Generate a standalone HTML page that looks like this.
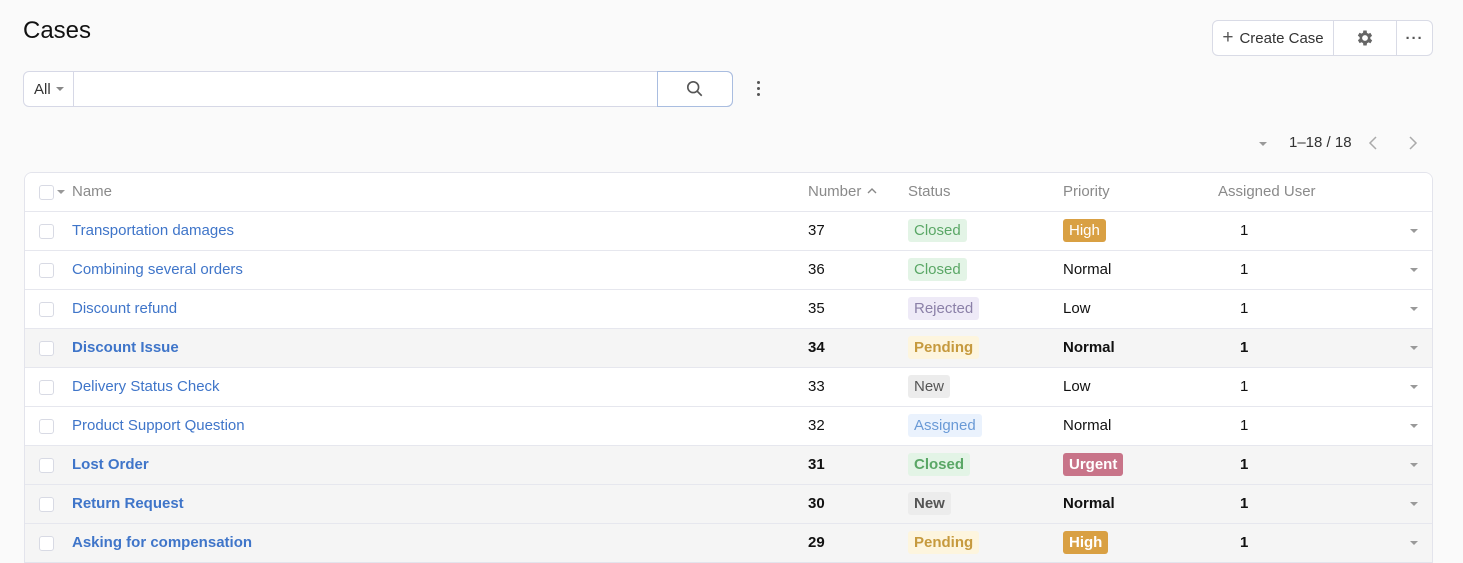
<!DOCTYPE html><html><head><style>
*{box-sizing:border-box;margin:0;padding:0}
body{width:1463px;height:562px;overflow:hidden;background:#fafafa;font-family:"Liberation Sans",sans-serif;font-size:15px;color:#111;position:relative}
.a{position:absolute}
h1{position:absolute;left:23px;top:17px;font-size:24px;font-weight:400;color:#111}
.btns{left:1212px;top:20px;width:221px;height:36px;border:1px solid #d9dbe6;border-radius:6px;background:#fff;display:flex}
.btns div{display:flex;align-items:center;justify-content:center;border-right:1px solid #d9dbe6;height:100%;color:#333}
.search{left:23px;top:71px;width:710px;height:36px;border:1px solid #d6d8e6;border-radius:6px;background:#fff}
.wrap{position:absolute;left:24px;top:172px;width:1409px;border:1px solid #e3e4ec;border-radius:8px 8px 0 0;overflow:hidden;background:#fff}
table{width:1407px;border-collapse:collapse;table-layout:fixed;background:#fff}
td{height:39px;border-top:1px solid #e6e7ee;padding:0;vertical-align:middle;white-space:nowrap}
tr.h td{height:38px;border-top:none;color:#8a8a8a}
tr.b td{background:#f5f5f5;font-weight:700}
.cb{display:inline-block;width:15px;height:15px;border:1px solid #d8dae4;border-radius:3px;background:#fff;margin-left:14px;vertical-align:middle}
a{color:#3f75c9;text-decoration:none}
.l{padding:3px 6px;border-radius:3px;font-weight:400}
tr.b .l{font-weight:700}
.cl{background:#e3f4e6;color:#5aa766}.rj{background:#eeeaf7;color:#8b80a8}.pe{background:#fdf5de;color:#c69a3e}.nw{background:#ececec;color:#555}.as{background:#eaf2fd;color:#6a9ad6}
.hi{background:#d9a043;color:#fff}.ur{background:#c87489;color:#fff}
.car{width:0;height:0;border-left:4px solid transparent;border-right:4px solid transparent;border-top:4px solid #999;display:inline-block;vertical-align:middle}
td.u{padding-left:22px}
td.c{text-align:right;padding-right:14px}
</style></head><body>
<h1>Cases</h1>
<div class="a btns"><div style="width:121px;font-size:15px"><span style="font-size:19px;margin-right:6px;color:#555">+</span>Create Case</div><div style="width:63px"><svg width="20" height="20" viewBox="0 0 24 24"><path fill="#666" d="M19.4 13a7.5 7.5 0 000-2l2.1-1.6-2-3.5-2.5 1a7.6 7.6 0 00-1.7-1L15 3h-4l-.4 2.7a7.6 7.6 0 00-1.7 1l-2.5-1-2 3.5L6.6 11a7.5 7.5 0 000 2l-2.1 1.6 2 3.5 2.5-1c.5.4 1.1.7 1.7 1L11 21h4l.4-2.7c.6-.3 1.200-.6 1.7-1l2.5 1 2-3.5zM13 15.5a3.5 3.5 0 110-7 3.5 3.5 0 010 7z" transform="translate(-1 0)"/></svg></div><div style="width:35px;border:none;font-weight:700;letter-spacing:1px;color:#555">···</div></div>
<div class="a search"><div class="a" style="left:0;top:0;width:50px;height:34px;border-right:1px solid #d6d8e6;display:flex;align-items:center;padding-left:10px;color:#333">All<span class="car" style="margin-left:5px;border-top-color:#888"></span></div>
<div class="a" style="left:633px;top:-1px;width:76px;height:36px;border:1px solid #a9bde0;border-radius:0 6px 6px 0;display:flex;align-items:center;justify-content:center"><svg width="18" height="18" viewBox="0 0 20 20"><circle cx="8" cy="8" r="6" fill="none" stroke="#555" stroke-width="1.8"/><path d="M12.5 12.5l5 5" stroke="#555" stroke-width="1.8"/></svg></div></div>
<div class="a" style="left:757px;top:81px;width:3px"><div style="width:3px;height:3px;background:#555;border-radius:50%;margin-bottom:3px"></div><div style="width:3px;height:3px;background:#555;border-radius:50%;margin-bottom:3px"></div><div style="width:3px;height:3px;background:#555;border-radius:50%"></div></div>
<span class="a car" style="left:1259px;top:142px"></span>
<div class="a" style="left:1289px;top:134px;color:#333">1–18 / 18</div>
<svg class="a" style="left:1367px;top:135px" width="12" height="16"><path d="M9 2L3 8l6 6" fill="none" stroke="#aaa" stroke-width="1.5"/></svg>
<svg class="a" style="left:1407px;top:135px" width="12" height="16"><path d="M3 2l6 6-6 6" fill="none" stroke="#aaa" stroke-width="1.5"/></svg>
<div class="wrap"><table>
<colgroup><col style="width:47px"><col style="width:736px"><col style="width:100px"><col style="width:155px"><col style="width:155px"><col style="width:170px"><col style="width:44px"></colgroup>
<tr class="h"><td><span class="cb"></span><span class="car" style="margin-left:3px"></span></td><td>Name</td><td>Number <svg width="12" height="10" viewBox="0 0 12 10"><path d="M2 7l4-4 4 4" fill="none" stroke="#888" stroke-width="1.4"/></svg></td><td>Status</td><td>Priority</td><td>Assigned User</td><td></td></tr>
<tr><td><span class="cb"></span></td><td><a>Transportation damages</a></td><td>37</td><td><span class="l cl">Closed</span></td><td><span class="l hi">High</span></td><td class="u">1</td><td class="c"><span class="car"></span></td></tr>
<tr><td><span class="cb"></span></td><td><a>Combining several orders</a></td><td>36</td><td><span class="l cl">Closed</span></td><td>Normal</td><td class="u">1</td><td class="c"><span class="car"></span></td></tr>
<tr><td><span class="cb"></span></td><td><a>Discount refund</a></td><td>35</td><td><span class="l rj">Rejected</span></td><td>Low</td><td class="u">1</td><td class="c"><span class="car"></span></td></tr>
<tr class="b"><td><span class="cb"></span></td><td><a>Discount Issue</a></td><td>34</td><td><span class="l pe">Pending</span></td><td>Normal</td><td class="u">1</td><td class="c"><span class="car"></span></td></tr>
<tr><td><span class="cb"></span></td><td><a>Delivery Status Check</a></td><td>33</td><td><span class="l nw">New</span></td><td>Low</td><td class="u">1</td><td class="c"><span class="car"></span></td></tr>
<tr><td><span class="cb"></span></td><td><a>Product Support Question</a></td><td>32</td><td><span class="l as">Assigned</span></td><td>Normal</td><td class="u">1</td><td class="c"><span class="car"></span></td></tr>
<tr class="b"><td><span class="cb"></span></td><td><a>Lost Order</a></td><td>31</td><td><span class="l cl">Closed</span></td><td><span class="l ur">Urgent</span></td><td class="u">1</td><td class="c"><span class="car"></span></td></tr>
<tr class="b"><td><span class="cb"></span></td><td><a>Return Request</a></td><td>30</td><td><span class="l nw">New</span></td><td>Normal</td><td class="u">1</td><td class="c"><span class="car"></span></td></tr>
<tr class="b"><td><span class="cb"></span></td><td><a>Asking for compensation</a></td><td>29</td><td><span class="l pe">Pending</span></td><td><span class="l hi">High</span></td><td class="u">1</td><td class="c"><span class="car"></span></td></tr>
</table></div>
</body></html>
